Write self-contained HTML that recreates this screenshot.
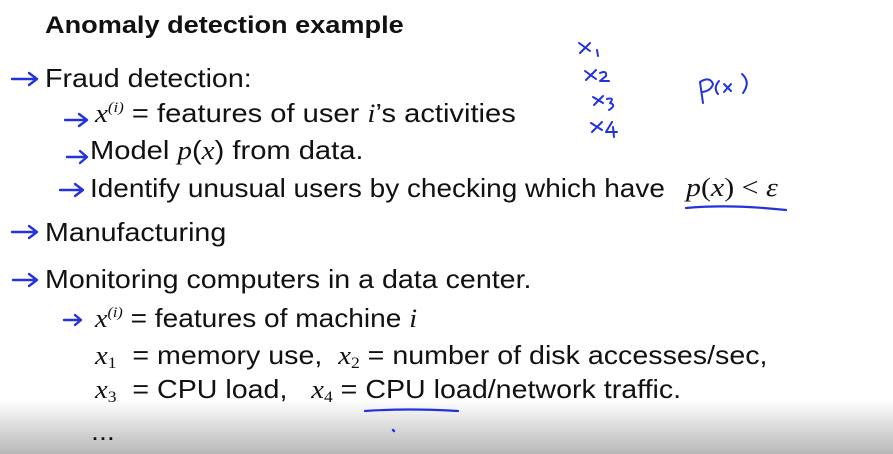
<!DOCTYPE html>
<html><head><meta charset="utf-8"><style>
html,body{margin:0;padding:0}
body{width:893px;height:454px;position:relative;overflow:hidden;background:#fff;font-family:"Liberation Sans",sans-serif;color:#111}
.t{position:absolute;white-space:nowrap;line-height:1;font-size:26px;transform-origin:0 0;transform:scaleX(1.1)}
.m{font-family:"Liberation Serif",serif;font-style:italic}
sup{font-size:15px;font-family:"Liberation Serif",serif;font-style:italic;vertical-align:10px}
sub{font-size:16px;font-family:"Liberation Serif",serif;font-style:normal;vertical-align:-4px}
.fade{position:absolute;left:0;top:400px;width:893px;height:54px;background:linear-gradient(#fff,#e2e2e2 40%,#b8b8b8)}
svg{position:absolute;left:0;top:0}
</style></head><body>
<div class="fade"></div>
<div class="t" style="left:45px;top:14px;font-weight:bold;font-size:24px;transform:scaleX(1.13)">Anomaly detection example</div>
<div class="t" style="left:45px;top:65px">Fraud detection:</div>
<div class="t" style="left:95px;top:100px;transform:scaleX(1.12)"><span class="m">x</span><sup>(i)</sup> = features of user <span class="m">i</span>’s activities</div>
<div class="t" style="left:90px;top:137px;transform:scaleX(1.12)">Model <span class="m">p</span>(<span class="m">x</span>) from data.</div>
<div class="t" style="left:90px;top:175px;transform:scaleX(1.075)">Identify unusual users by checking which have</div>
<div class="t" style="left:686px;top:175px;font-family:'Liberation Serif',serif;transform:scaleX(1.15)"><i>p</i>(<i>x</i>) &lt; <i>ε</i></div>
<div class="t" style="left:45px;top:219px">Manufacturing</div>
<div class="t" style="left:45px;top:266px">Monitoring computers in a data center.</div>
<div class="t" style="left:95px;top:305px;transform:scaleX(1.08)"><span class="m">x</span><sup>(i)</sup> = features of machine <span class="m">i</span></div>
<div class="t" style="left:95px;top:342px;transform:scaleX(1.1)"><span class="m">x</span><sub>1</sub>&nbsp; = memory use,&nbsp; <span class="m">x</span><sub>2</sub> = number of disk accesses/sec,</div>
<div class="t" style="left:95px;top:376px;transform:scaleX(1.1)"><span class="m">x</span><sub>3</sub>&nbsp; = CPU load,&nbsp;&nbsp; <span class="m">x</span><sub>4</sub> = CPU load/network traffic.</div>
<div class="t" style="left:91px;top:418px">...</div>
<svg width="893" height="454" fill="none" stroke="#2233dd" stroke-width="2.4" stroke-linecap="round" stroke-linejoin="round">
<path d="M12 79 L36 79 M29 73 L37 79 L29 85"/>
<path d="M65 120 L86 120 M79 114 L87 120 L79 126"/>
<path d="M67 157 L86 157 M80 151 L87 157 L80 163"/>
<path d="M60 190 L82 190 M75 184 L83 190 L75 196"/>
<path d="M12 232 L36 232 M29 226 L37 232 L29 238"/>
<path d="M13 280 L36 280 M29 274 L37 280 L29 286"/>
<path d="M64 320 L80 320 M75 315 L81 320 L75 325"/>
<path d="M686 208 Q730 204 786 210" stroke-width="2.2"/>
<path d="M365 411 Q410 408 458 411" stroke-width="2.2"/>
<path d="M393 430 l1 1"/>
<g stroke-width="2">
<path d="M579 43 L590 51 M590 43 L580 53 M597 50 L598 56"/>
<path d="M585 71 L596 79 M596 70 L586 80 M600 73 Q607 70 606 76 L600 81 L609 81"/>
<path d="M593 97 L603 103 M603 96 L594 105 M607 99 Q615 97 610 103 Q617 105 609 110"/>
<path d="M591 123 L602 130 M602 122 L592 132 M612 122 L606 132 L617 132 M613 127 L614 137"/>
<path d="M703 103 L700 82 Q710 76 713 84 Q711 91 702 92 M719 81 Q713 88 718 94 M724 84 L731 91 M731 84 L724 92 M742 74 Q751 82 743 93"/>
</g>
</svg>
</body></html>
